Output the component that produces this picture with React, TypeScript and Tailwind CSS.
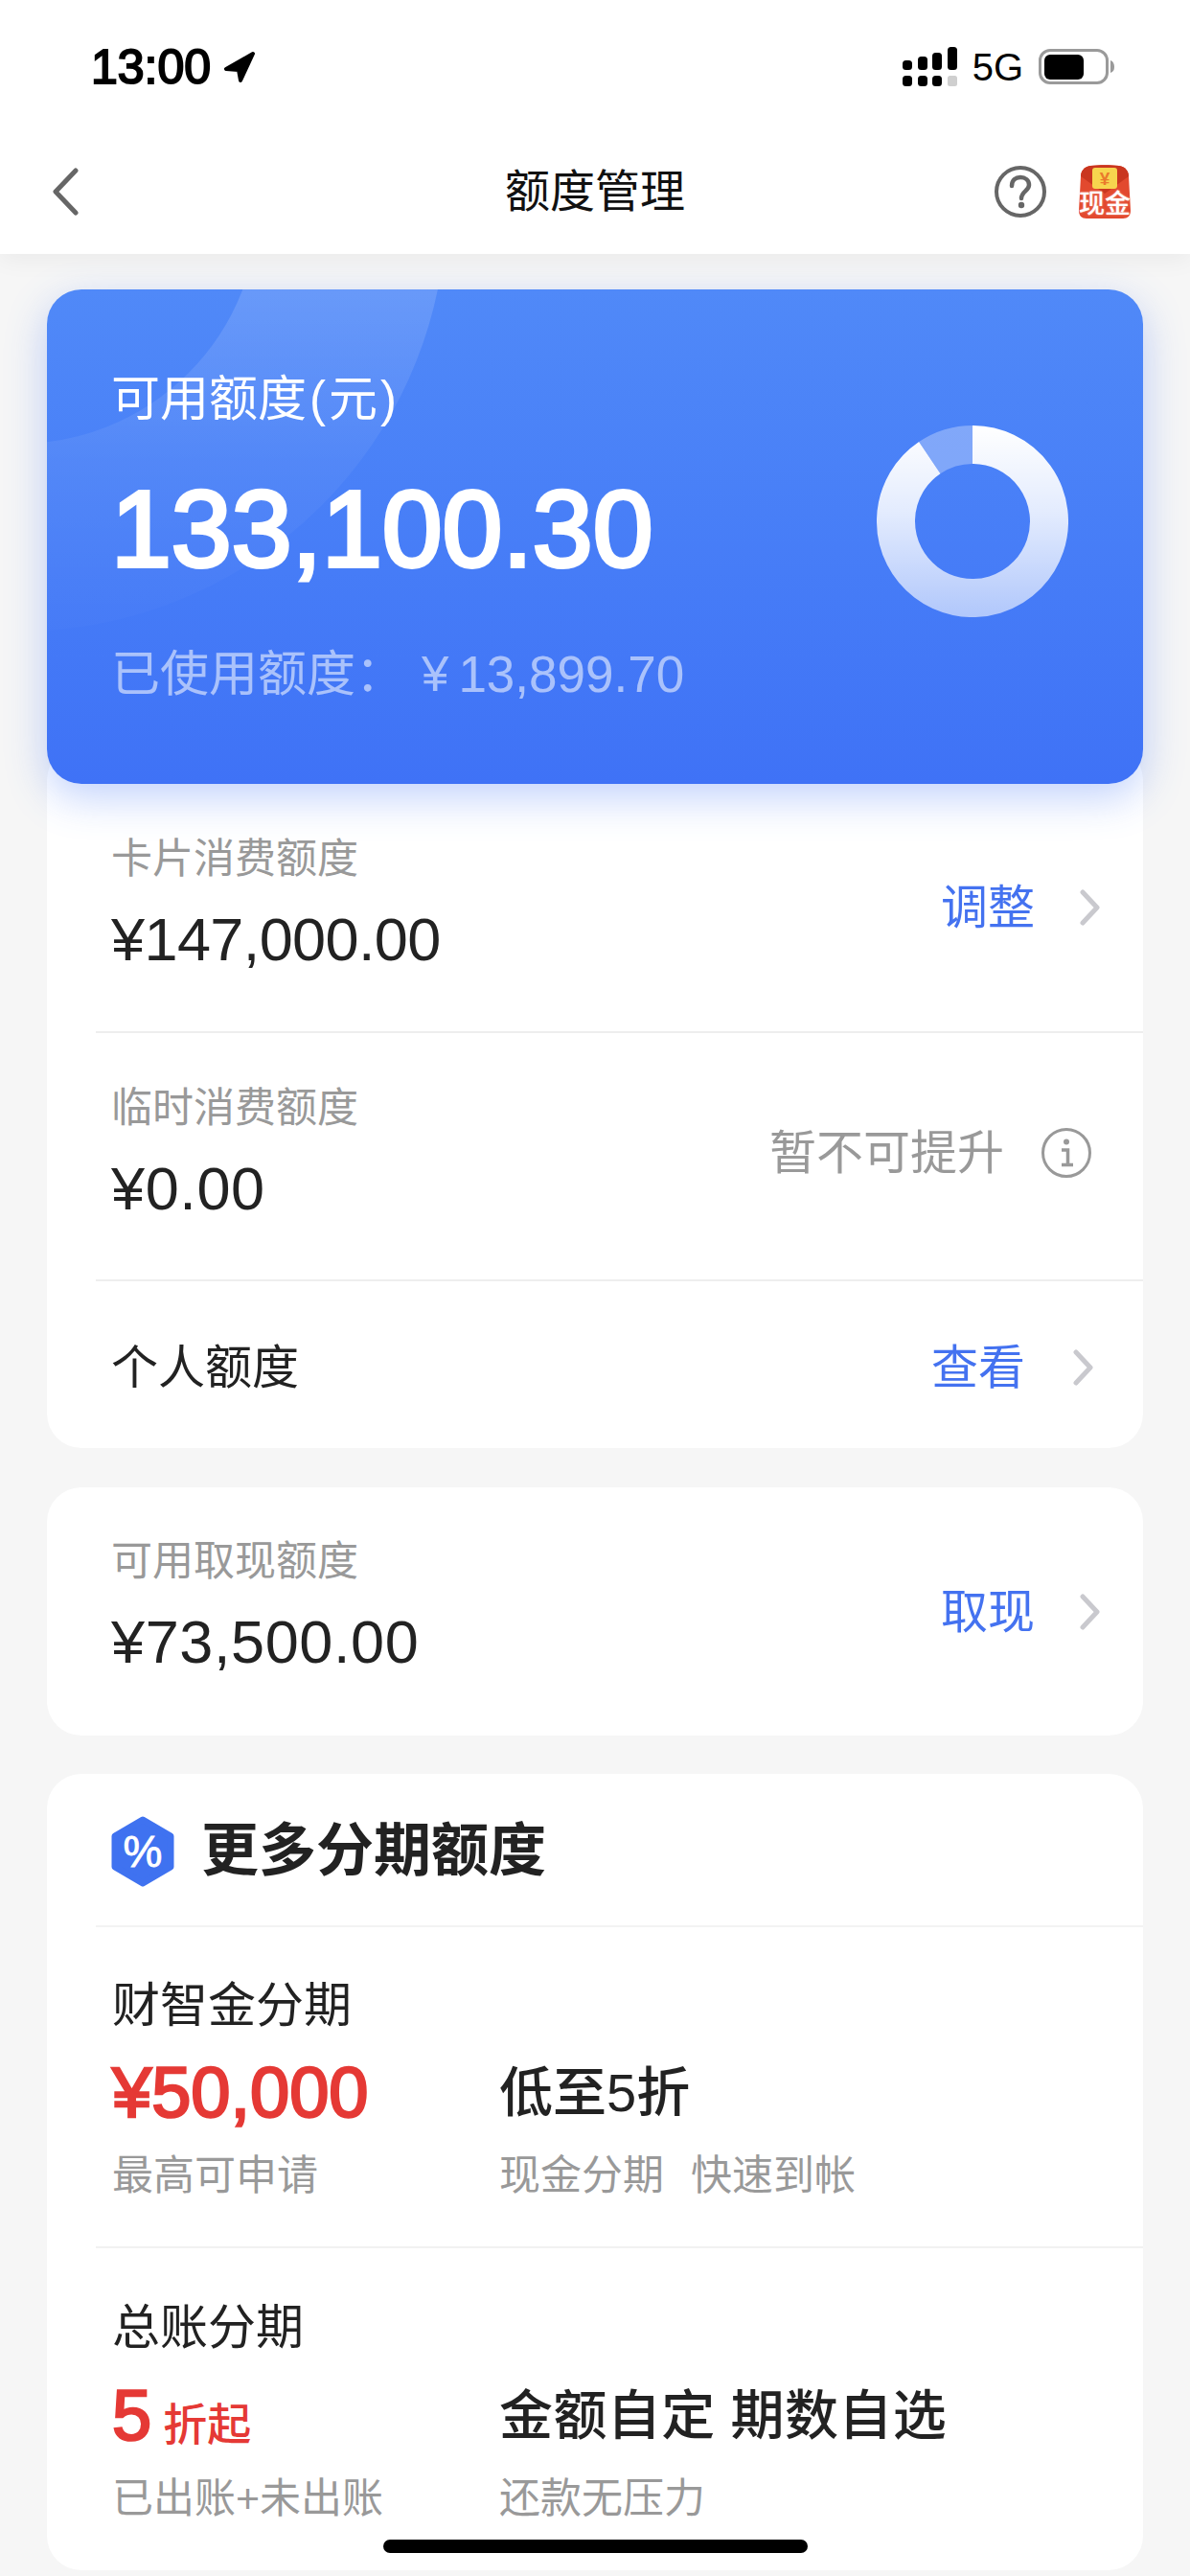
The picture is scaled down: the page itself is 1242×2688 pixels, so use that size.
import React from "react";

const Chevron = () => (
  <svg width="24" height="38" viewBox="0 0 24 38" fill="none" className="block">
    <polyline points="4,3 19,19 4,35" stroke="#c9c9ce" strokeWidth="5" strokeLinejoin="round" strokeLinecap="round" />
  </svg>
);

const Amount = ({ label, value, boxClass, valueClass }: { label: string; value: string; boxClass: string; valueClass: string }) => (
  <div className={`flex flex-col ${boxClass}`}>
    <div className="h-[50px] text-[43px] leading-[50px] text-[#999999]">{label}</div>
    <div className={`mt-[24px] h-[70px] text-[63px] leading-[70px] text-[#222222] ${valueClass}`}>{value}</div>
  </div>
);

const ActionLink = ({ text }: { text: string }) => (
  <div className="flex items-center gap-[46px] pr-[43px]">
    <span className="text-[49px] leading-[60px] text-[#4472f0]">{text}</span>
    <Chevron />
  </div>
);

const Donut = () => {
  const r = 80;
  const a = (34 * Math.PI) / 180;
  const x = 100 - r * Math.sin(a);
  const y = 100 - r * Math.cos(a);
  return (
    <svg width="200" height="200" viewBox="0 0 200 200" fill="none" className="block">
      <defs>
        <linearGradient id="donut" gradientUnits="userSpaceOnUse" x1="0" y1="0" x2="0" y2="200">
          <stop offset="0" stopColor="#ffffff" />
          <stop offset="0.45" stopColor="#ffffff" stopOpacity="0.85" />
          <stop offset="1" stopColor="#ffffff" stopOpacity="0.58" />
        </linearGradient>
      </defs>
      <path d={`M100 20 A${r} ${r} 0 1 1 ${x} ${y}`} stroke="url(#donut)" strokeWidth="40" />
      <path d={`M${x} ${y} A${r} ${r} 0 0 1 100 20`} stroke="#ffffff" strokeOpacity="0.3" strokeWidth="40" />
    </svg>
  );
};

const CardDecoration = () => (
  <svg width="1144" height="516" viewBox="0 0 1144 516" fill="none" className="absolute left-0 top-0">
    <defs>
      <linearGradient id="ring" gradientUnits="userSpaceOnUse" x1="0" y1="0" x2="0" y2="360">
        <stop offset="0" stopColor="#ffffff" stopOpacity="0.14" />
        <stop offset="0.5" stopColor="#ffffff" stopOpacity="0.05" />
        <stop offset="1" stopColor="#ffffff" stopOpacity="0.012" />
      </linearGradient>
    </defs>
    <circle cx="-30" cy="-90" r="349" stroke="url(#ring)" strokeWidth="196" />
  </svg>
);

const StatusIcons = () => (
  <div className="flex items-center">
    <svg width="58" height="42" viewBox="0 0 58 42" className="block">
      <rect x="0" y="14" width="10" height="10" rx="3.5" fill="#000" />
      <rect x="16" y="10" width="10" height="14" rx="3.5" fill="#000" />
      <rect x="31" y="6" width="10" height="18" rx="3.5" fill="#000" />
      <rect x="47" y="0" width="10" height="24" rx="3.5" fill="#000" />
      <rect x="0" y="30" width="10" height="11" rx="3.5" fill="#000" />
      <rect x="16" y="30" width="10" height="11" rx="3.5" fill="#000" />
      <rect x="31" y="30" width="10" height="11" rx="3.5" fill="#000" />
      <rect x="47" y="30" width="10" height="11" rx="2.5" fill="#cfcfcf" />
    </svg>
    <span className="ml-[15px] text-[40px] leading-[44px] text-black">5G</span>
    <svg width="80" height="38" viewBox="0 0 80 38" className="ml-[16px] block">
      <rect x="1.5" y="1.5" width="70" height="34" rx="10.5" fill="none" stroke="#9a9a9a" strokeWidth="3" />
      <rect x="6" y="6" width="41" height="26" rx="6" fill="#000" />
      <path d="M75 12 C78 13 79 16 79 19 C79 22 78 24 75 25 Z" fill="#9a9a9a" />
    </svg>
  </div>
);

const RedPacket = () => (
  <div className="relative h-[56px] w-[56px]">
    <svg width="56" height="56" viewBox="0 0 56 56" className="block">
      <path d="M3 12 C3 6 7 2 13 1 C22 0 34 0 43 1 C49 2 53 6 53 12 L55 48 C55 53 52 56 47 56 L9 56 C4 56 1 53 1 48 Z" fill="#e2492e" />
      <path d="M3 12 C3 6 7 2 13 1 C22 0 34 0 43 1 C49 2 53 6 53 12 L28 30 Z" fill="#c9361f" />
      <rect x="15" y="3" width="26" height="22" rx="3" fill="#f7d54e" />
      <text x="28" y="21" textAnchor="middle" fontSize="19" fontWeight="700" fill="#ea7a2c" fontFamily="'Liberation Sans',sans-serif">¥</text>
    </svg>
    <span className="absolute bottom-0 left-0 w-[56px] whitespace-nowrap text-center text-[27px] font-medium leading-[30px] text-white [text-shadow:0_0_2px_#f7b3a0]">现金</span>
  </div>
);

const InstallmentSection = ({
  title,
  left,
  leftSub,
  right,
  rightSub,
  rowClass,
  topClass,
  divider,
}: {
  title: string;
  left: React.ReactNode;
  leftSub: string;
  right: React.ReactNode;
  rightSub: React.ReactNode;
  rowClass: string;
  topClass: string;
  divider: boolean;
}) => (
  <div className={`ml-[51px] pl-[17px] ${topClass} ${divider ? "border-b-2 border-[#f1f1f1] pb-[49px]" : "pb-[50px]"}`}>
    <div className="h-[60px] text-[50px] leading-[60px] text-[#222222]">{title}</div>
    <div className={`grid grid-cols-[404px_1fr] ${rowClass}`}>
      <div className="h-[80px] whitespace-nowrap leading-[80px]">{left}</div>
      <div className="h-[80px] whitespace-nowrap leading-[80px]">{right}</div>
      <div className="mt-[21px] h-[50px] text-[43px] leading-[50px] text-[#999999]">{leftSub}</div>
      <div className="mt-[21px] h-[50px] whitespace-nowrap text-[43px] leading-[50px] text-[#999999]">{rightSub}</div>
    </div>
  </div>
);

export default function App() {
  return (
    <div className="relative h-[2688px] w-[1242px] overflow-hidden bg-[#f6f6f6] font-['Liberation_Sans','Noto_Sans_CJK_SC',sans-serif]">
      <header className="relative z-10 bg-white shadow-[0_6px_24px_rgba(0,0,0,0.05)]">
        <div className="flex h-[135px] items-center justify-between pl-[95px] pr-[78px] pt-[5px]">
          <div className="flex items-center gap-[13px]">
            <span className="text-[50px] leading-[56px] text-black [-webkit-text-stroke:2px_black]">13:00</span>
            <svg width="34" height="34" viewBox="0 0 34 34" className="block">
              <path d="M31 3 L3 19 L16 20 L18 31 Z" fill="#000" stroke="#000" strokeWidth="4" strokeLinejoin="round" />
            </svg>
          </div>
          <StatusIcons />
        </div>
        <div className="grid h-[130px] grid-cols-[1fr_auto_1fr] items-center">
          <div className="pl-[53px]">
            <svg width="30" height="50" viewBox="0 0 30 50" fill="none" className="block">
              <polyline points="26,3 5,25 26,47" stroke="#666666" strokeWidth="5" strokeLinejoin="round" strokeLinecap="round" />
            </svg>
          </div>
          <div className="text-[47px] leading-[60px] text-[#111111]">额度管理</div>
          <div className="flex items-center justify-end gap-[32px] pr-[61px]">
            <svg width="56" height="56" viewBox="0 0 56 56" fill="none" className="block">
              <circle cx="28" cy="28" r="25" stroke="#666666" strokeWidth="4" />
              <path d="M19 22 C19 16 23 13 28 13 C33 13 37 16 37 21 C37 27 29 28 29 35" stroke="#666666" strokeWidth="4.5" strokeLinecap="round" />
              <circle cx="29" cy="42" r="3.2" fill="#666666" />
            </svg>
            <RedPacket />
          </div>
        </div>
      </header>

      <main className="flex flex-col px-[49px]">
        <section className="relative z-[1] mt-[37px] flex h-[516px] justify-between overflow-hidden rounded-[36px] bg-gradient-to-b from-[#5089f8] to-[#3f72f6]">
          <CardDecoration />
          <div className="relative flex flex-col pl-[67px] pt-[85px]">
            <div className="h-[60px] text-[51px] leading-[60px] text-white">
              可用额度<span className="mx-[3px]">(</span>元<span className="mx-[3px]">)</span>
            </div>
            <div className="mt-[45px] h-[120px] text-[113px] leading-[120px] text-white [-webkit-text-stroke:4px_white]">133,100.30</div>
            <div className="mt-[62px] flex h-[60px] items-center text-[51px] leading-[60px] text-white/55">
              <span>已使用额度：</span>
              <span className="ml-[18px] mr-[10px]">¥</span>
              <span className="text-[53px]">13,899.70</span>
            </div>
          </div>
          <div className="relative mr-[78px] mt-[142px]">
            <Donut />
          </div>
        </section>
        <div className="absolute left-[49px] top-[302px] z-0 h-[516px] w-[1144px] rounded-[36px] shadow-[0_14px_44px_rgba(63,114,246,0.32)]" />

        <section className="-mt-[40px] rounded-[36px] bg-white pt-[40px]">
          <div className="ml-[51px] flex h-[260px] items-center justify-between border-b-2 border-[#eeeeee] pl-[16px]">
            <Amount label="卡片消费额度" value="¥147,000.00" boxClass="pb-[8px]" valueClass="tracking-[-0.6px]" />
            <ActionLink text="调整" />
          </div>
          <div className="ml-[51px] flex h-[259px] items-center justify-between border-b-2 border-[#eeeeee] pl-[16px]">
            <Amount label="临时消费额度" value="¥0.00" boxClass="pb-[8px]" valueClass="tracking-[0.6px]" />
            <div className="flex items-center gap-[39px] pb-[8px] pr-[54px]">
              <span className="text-[49px] leading-[60px] text-[#999999]">暂不可提升</span>
              <svg width="52" height="52" viewBox="0 0 52 52" fill="none" className="block">
                <circle cx="26" cy="26" r="24.5" stroke="#999999" strokeWidth="3" />
                <circle cx="26" cy="14.5" r="3" fill="#999999" />
                <path d="M21 23 H27.5 V38 M21 38.5 H33" stroke="#999999" strokeWidth="3.5" />
              </svg>
            </div>
          </div>
          <div className="ml-[51px] flex h-[174px] items-center justify-between pl-[16px] pt-[6px]">
            <span className="text-[49px] leading-[60px] text-[#222222]">个人额度</span>
            <div className="flex items-center gap-[49px] pr-[50px]">
              <span className="text-[49px] leading-[60px] text-[#4472f0]">查看</span>
              <Chevron />
            </div>
          </div>
        </section>

        <section className="mt-[41px] rounded-[36px] bg-white">
          <div className="ml-[51px] flex h-[259px] items-center justify-between pl-[16px]">
            <Amount label="可用取现额度" value="¥73,500.00" boxClass="pb-[12px]" valueClass="tracking-[0.6px]" />
            <ActionLink text="取现" />
          </div>
        </section>

        <section className="mt-[40px] rounded-[36px] bg-white">
          <div className="flex h-[158px] items-center pl-[67px] pt-[4px]">
            <svg width="66" height="74" viewBox="0 0 66 74" className="block">
              <polygon points="33,4 62,21 62,53 33,70 4,53 4,21" fill="#3f72f0" stroke="#3f72f0" strokeWidth="7" strokeLinejoin="round" />
              <text x="33" y="53" textAnchor="middle" fontSize="46" fill="#ffffff" stroke="#ffffff" strokeWidth="0.8" fontFamily="'Liberation Sans',sans-serif">%</text>
            </svg>
            <span className="ml-[28px] text-[60px] font-semibold leading-[70px] text-[#222222]">更多分期额度</span>
          </div>
          <div className="ml-[51px] h-[2px] bg-[#f3f3f3]" />
          <InstallmentSection
            title="财智金分期"
            topClass="pt-[52px]"
            rowClass="mt-[21px]"
            divider
            left={<span className="text-[74px] text-[#e53935] [-webkit-text-stroke:2.5px_#e53935]">¥50,000</span>}
            leftSub="最高可申请"
            right={<span className="text-[56px] font-medium text-[#222222]">低至5折</span>}
            rightSub={
              <>
                现金分期<span className="ml-[28px]">快速到帐</span>
              </>
            }
          />
          <InstallmentSection
            title="总账分期"
            topClass="pt-[53px]"
            rowClass="mt-[22px]"
            divider={false}
            left={
              <span className="text-[#e53935]">
                <span className="text-[74px] [-webkit-text-stroke:2.5px_#e53935]">5</span>
                <span className="ml-[12px] text-[46px] font-medium">折起</span>
              </span>
            }
            leftSub="已出账+未出账"
            right={<span className="text-[56px] font-medium tracking-[0.4px] text-[#222222]">金额自定 期数自选</span>}
            rightSub="还款无压力"
          />
        </section>
      </main>

      <div className="absolute bottom-[24px] left-[400px] z-20 h-[14px] w-[443px] rounded-full bg-black" />
    </div>
  );
}
